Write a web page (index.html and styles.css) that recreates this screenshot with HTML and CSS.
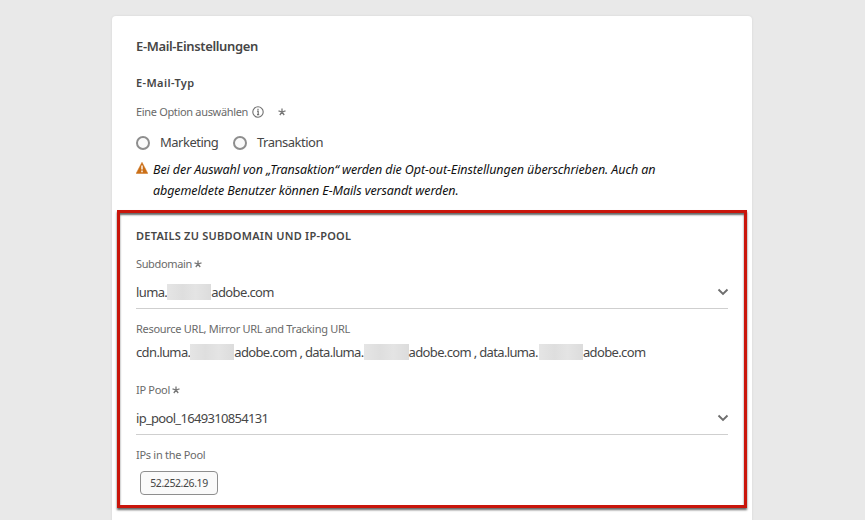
FILE: index.html
```html
<!DOCTYPE html>
<html lang="de">
<head>
<meta charset="utf-8">
<title>E-Mail-Einstellungen</title>
<link rel="stylesheet" href="styles.css">
</head>
<body>
<main class="card">
  <section class="type">
    <h1 class="title"><span>E-Mail-Einstellungen</span></h1>
    <h2 class="subtitle"><span>E-Mail-Typ</span></h2>
    <div class="label option">
      <span class="option-text">Eine Option auswählen</span>
      <svg class="info" viewBox="0 0 12 12"><circle cx="6" cy="6" r="5.2" fill="none" stroke="#707070" stroke-width="1.1"/><path d="M5 5.2h1.2v3.3M5 8.6h2.2M6 2.7v1.3" fill="none" stroke="#707070" stroke-width="1.2"/></svg>
      <svg class="star" viewBox="0 0 8 8"><path d="M4 4V.4M4 4 .5 2.9M4 4l3.5-1.1M4 4 1.8 7M4 4l2.2 3" stroke="#777" stroke-width="1.3"/></svg>
    </div>
    <div class="radios">
      <label class="radio"><i class="dot"></i><span class="radio-text">Marketing</span></label>
      <label class="radio"><i class="dot"></i><span class="radio-text">Transaktion</span></label>
    </div>
    <div class="warning">
      <svg class="alert" viewBox="0 0 12 12"><path d="M6 .3 11.8 11.4H.2Z" fill="#cb6f17" stroke="#cb6f17" stroke-width=".5" stroke-linejoin="round"/><path d="M6 3.5v4M6 8.6v1.6" stroke="#fff" stroke-width="1.4"/></svg>
      <p class="warning-text"><span>Bei der Auswahl von „Transaktion“ werden die Opt-out-Einstellungen überschrieben. Auch an</span><br><span>abgemeldete Benutzer können E-Mails versandt werden.</span></p>
    </div>
  </section>
  <section class="frame">
    <h2 class="heading"><span>DETAILS ZU SUBDOMAIN UND IP-POOL</span></h2>
    <div class="label subdomain"><span class="t-sub">Subdomain</span><svg class="star" viewBox="0 0 8 8"><path d="M4 4V.4M4 4 .5 2.9M4 4l3.5-1.1M4 4 1.8 7M4 4l2.2 3" stroke="#777" stroke-width="1.3"/></svg></div>
    <div class="select">
      <span class="domain"><span class="p-luma">luma.</span><i class="mask"></i><span class="p-adobe">adobe.com</span></span>
      <svg class="chevron" viewBox="0 0 12 8"><path d="M1.5 1.5 6 6l4.5-4.5" fill="none" stroke="#6e6e6e" stroke-width="1.9"/></svg>
    </div>
    <div class="label resource"><span>Resource URL, Mirror URL and Tracking URL</span></div>
    <div class="urls"><span class="p-cdn">cdn.luma.</span><i class="mask"></i><span class="p-mid">adobe.com , data.luma.</span><i class="mask"></i><span class="p-mid">adobe.com , data.luma.</span><i class="mask"></i><span class="p-adobe">adobe.com</span></div>
    <div class="label pool"><span class="t-pool">IP Pool</span><svg class="star" viewBox="0 0 8 8"><path d="M4 4V.4M4 4 .5 2.9M4 4l3.5-1.1M4 4 1.8 7M4 4l2.2 3" stroke="#777" stroke-width="1.3"/></svg></div>
    <div class="select">
      <span class="p-ip">ip_pool_1649310854131</span>
      <svg class="chevron" viewBox="0 0 12 8"><path d="M1.5 1.5 6 6l4.5-4.5" fill="none" stroke="#6e6e6e" stroke-width="1.9"/></svg>
    </div>
    <div class="label ips"><span>IPs in the Pool</span></div>
    <div class="chip"><span>52.252.26.19</span></div>
  </section>
</main>
</body>
</html>
```
FILE: styles.css
```css
* { box-sizing: border-box; }
body { margin: 0; height: 520px; overflow: hidden; background: #e9e9e9; font-family: "Noto Sans", sans-serif; font-size: 13px; color: #464646; }
.card { width: 640px; height: 520px; margin: 16px 0 0 112px; background: #fff; border-radius: 4px; box-shadow: 0 0 3px rgba(0,0,0,.08); overflow: hidden; }
.type { height: 194px; padding: 20px 24px 0; }
h1, h2, p { margin: 0; }
span { white-space: nowrap; }
.title { height: 20px; font-size: 13px; line-height: 20px; font-weight: 600; letter-spacing: -.36px; }
.subtitle { height: 16px; margin-top: 19px; font-size: 11px; line-height: 16px; letter-spacing: .4px; font-weight: 600; }
.label { display: flex; align-items: center; height: 16px; font-size: 11px; line-height: 16px; color: #6a6a6a; letter-spacing: -.29px; }
.option { margin-top: 13px; }
.option-text { width: 116px; letter-spacing: -.33px; }
.info { width: 12px; height: 12px; }
.star { width: 8px; height: 8px; flex: none; margin-left: 2px; }
.option .star { margin-left: 14px; }
.t-sub { width: 56px; letter-spacing: -.36px; }
.t-pool { width: 34px; }
.radios { display: flex; height: 20px; margin-top: 13px; line-height: 20px; }
.radio { display: flex; align-items: center; width: 97px; letter-spacing: -.5px; }
.radio-text { padding-bottom: 2px; }
.dot { width: 14px; height: 14px; margin-right: 10px; border: 2px solid #8e8e8e; border-radius: 50%; background: #fafafa; }
.warning { display: flex; margin-top: 6px; color: #111; font-style: italic; font-size: 12.5px; line-height: 21px; letter-spacing: -.09px; }
.alert { width: 12px; height: 12px; margin: 3px 5px 0 0; flex: none; }
.frame { width: 630px; height: 298px; margin-left: 5px; padding: 15px 16px 0; border: 3px solid #c9150b; box-shadow: 0 2px 2px #666, inset 0 2px 2px #666; }
.heading { height: 16px; font-size: 11px; line-height: 16px; font-weight: 600; letter-spacing: .25px; }
.subdomain { margin-top: 12px; }
.select { display: flex; align-items: center; justify-content: space-between; height: 37px; padding-top: 4px; border-bottom: 1px solid #cfcfcf; }
.domain, .urls { display: flex; align-items: center; letter-spacing: -.63px; }
.p-luma { width: 31px; }
.p-cdn { width: 54px; }
.p-mid { width: 130px; letter-spacing: -.65px; }
.p-ip { letter-spacing: -.69px; }
.mask { flex: none; width: 44.3px; height: 16px; background: linear-gradient(90deg, #e5e5e5, #dedede 35%, #e4e4e4 65%, #dcdcdc); }
.chevron { width: 12px; height: 8px; margin-right: -1px; }
.resource { margin-top: 12px; }
.urls { height: 20px; margin-top: 5px; }
.pool { margin-top: 20px; }
.ips { margin-top: 12px; }
.chip { display: flex; align-items: center; justify-content: center; width: 78px; height: 24px; margin: 8px 0 0 4px; border: 1px solid #8e8e8e; border-radius: 4px; background: #fafafa; font-size: 10.5px; letter-spacing: -.42px; }
```
